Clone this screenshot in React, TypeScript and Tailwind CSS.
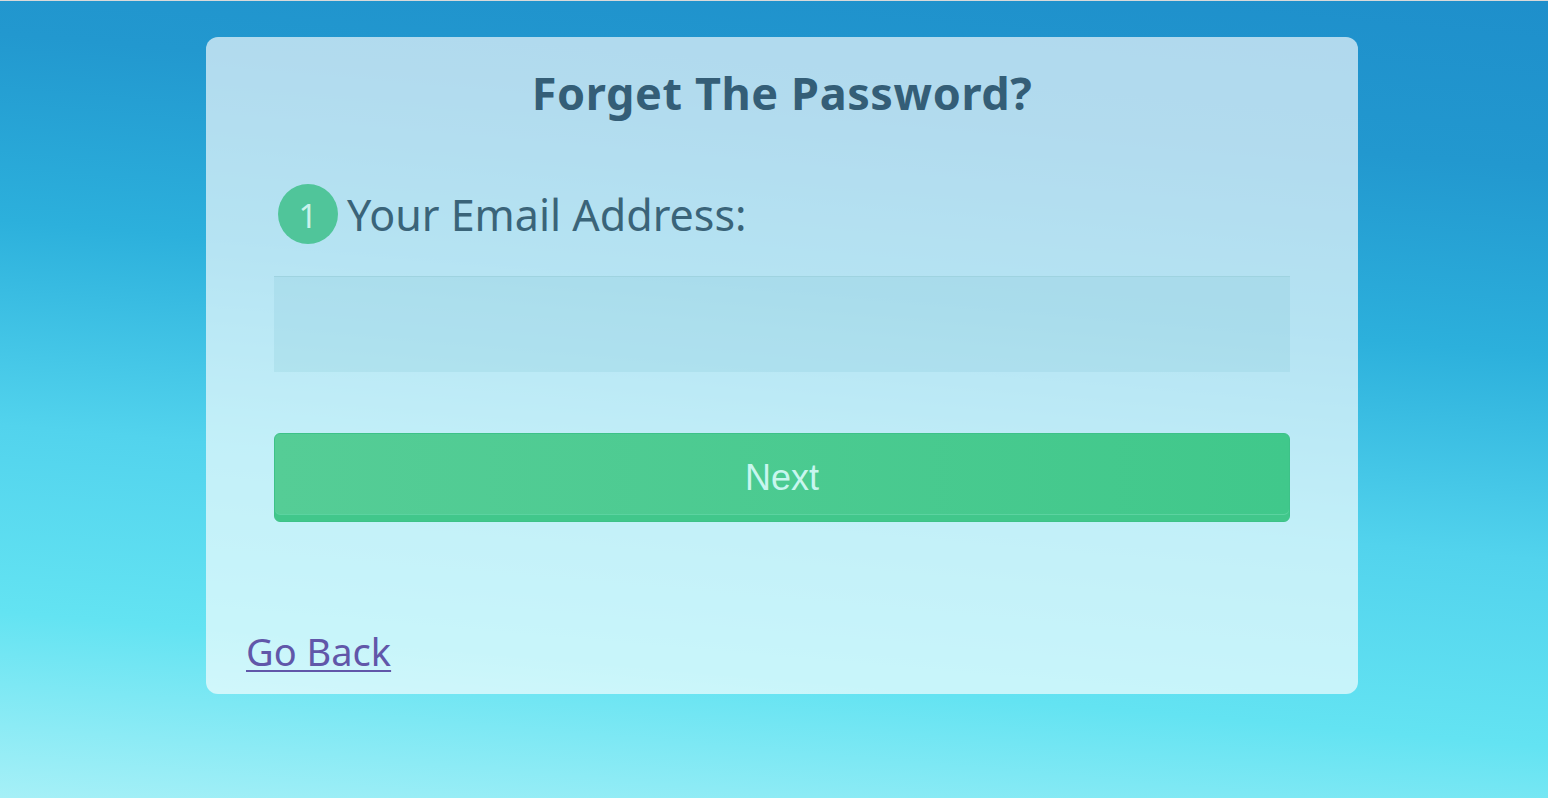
import React, { useState } from 'react';

const font = { fontFamily: '"Noto Sans", "Open Sans", sans-serif' };

const ForgotPassword: React.FC = () => {
  const [email, setEmail] = useState('');

  return (
    <div className="w-[1152px] h-[657px] ml-[206px] mt-[36px] rounded-[12px] bg-white/65 relative flex flex-col" style={font}>
      <h1 className="text-center text-[45px] leading-none font-bold text-[#345e77] mt-[33px] tracking-[0.6px]">
        Forget The Password?
      </h1>

      <div className="flex items-center gap-[9px] ml-[72px] mt-[69px]">
        <span className="w-[60px] h-[60px] rounded-full bg-[#50c59a] flex items-center justify-center text-[33px] text-[#c9f2ec] leading-none pt-[2px]">
          1
        </span>
        <span className="text-[43px] leading-none text-[#3a6479]">Your Email Address:</span>
      </div>

      <input
        type="email"
        value={email}
        onChange={(e) => setEmail(e.target.value)}
        className="mx-[68px] mt-[32px] h-[96px] bg-[#7cc3d4]/20 border-t border-[#9fd3e0] outline-none px-4 text-[28px] text-[#345e77]"
      />

      <button
        type="button"
        className="mx-[68px] mt-[61px] h-[89px] rounded-[6px] border border-[#3dc288] bg-gradient-to-r from-[#55cd96] to-[#40c88b] text-[36px] text-[#c8f6ef] shadow-[inset_0_-6px_0_#41c78b,inset_0_-7px_0_#5bd3a0]"
        style={{ fontFamily: '"Liberation Sans", Arial, sans-serif' }}
      >
        Next
      </button>

      <a href="#" className="absolute left-[40px] bottom-[24px] text-[38px] leading-none text-[#6157a9] underline underline-offset-[4px] decoration-[2px]">
        Go Back
      </a>
    </div>
  );
};

export default function App() {
  return (
    <div
      className="w-[1548px] h-[798px] overflow-hidden border-t border-[#d9d9d9]"
      style={{
        background:
          'linear-gradient(185deg, #1e8fcb 0%, #2298cf 18%, #2cb0dc 38%, #52d3ed 60%, #63e3f2 80%, #a6f0f7 100%)',
      }}
    >
      <ForgotPassword />
    </div>
  );
}
